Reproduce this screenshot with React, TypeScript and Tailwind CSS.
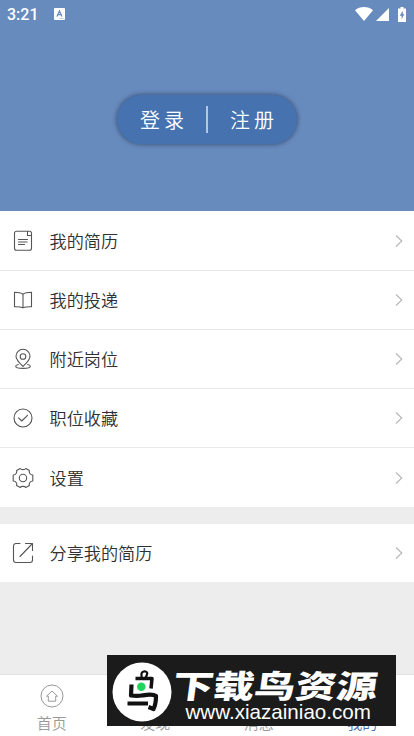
import React from "react";

interface MenuRowProps {
  label: string;
  icon: React.ReactNode;
  className?: string;
}

const iconProps = {
  width: 22,
  height: 22,
  viewBox: "0 0 22 22",
  fill: "none",
  stroke: "currentColor",
  strokeWidth: 1.1,
  strokeLinecap: "round" as const,
  strokeLinejoin: "round" as const,
};

const ResumeIcon = () => (
  <svg {...iconProps}>
    <path d="M15.500 1.300H4.500a2 2 0 0 0-2 2v15a2 2 0 0 0 2 2h13a2 2 0 0 0 2-2V5.500M15.500 1.300v4.200h4V3.300a2 2 0 0 0-2-2h-2" />
    <path d="M6.500 9.500h9M6.500 12h8.500M6.500 14.500h6" />
  </svg>
);

const BookIcon = () => (
  <svg {...iconProps}>
    <path d="M11 5.200C8.500 3.300 5.500 3.300 2.500 3.300v14.400c3 0 6-.2 8.500 1.100 2.500-1.300 5.500-1.100 8.500-1.100V3.300c-3 0-6 0-8.500 1.900zM11 5.200v13.300" />
  </svg>
);

const PinIcon = () => (
  <svg {...iconProps}>
    <path d="M11 18.300C7.500 15 4 12 4 8.200a7 6.900 0 0 1 14 0c0 3.800-3.500 6.800-7 10.100z" />
    <circle cx="11" cy="8.500" r="2.800" />
    <path d="M6.300 16.500c-1.600.4-2.600 1-2.600 1.700 0 1.300 3.200 2.200 7.300 2.200s7.300-.9 7.300-2.200c0-.7-1-1.300-2.600-1.700" />
  </svg>
);

const CheckIcon = () => (
  <svg {...iconProps}>
    <circle cx="11" cy="11" r="9" />
    <path d="M6.500 10.800l3.300 3.200 5.700-5.700" />
  </svg>
);

const GearIcon = () => (
  <svg {...iconProps}>
    <path d="M8.200 1.500c.9 1.500 4.700 1.500 5.600 0l3.600 1.900c-.7 2 .7 4.600 3.400 4.600v6c-2.700 0-4.100 2.600-3.400 4.600l-3.600 1.900c-.9-1.500-4.700-1.500-5.600 0l-3.600-1.900c.7-2-.7-4.600-3.400-4.600V8c2.700 0 4.100-2.600 3.400-4.600z" />
    <circle cx="11" cy="11" r="3.700" />
  </svg>
);

const ShareIcon = () => (
  <svg {...iconProps}>
    <path d="M8 1.500H4A2.500 2.500 0 0 0 1.500 4v14A2.500 2.500 0 0 0 4 20.500h14a2.500 2.500 0 0 0 2.500-2.500v-4M13.500 1.500h7v7M20 2L8 14.500" />
  </svg>
);

const MenuRow: React.FC<MenuRowProps> = ({ label, icon, className = "h-[59px]" }) => (
  <div className={`flex items-center bg-white pl-3 pr-[11px] ${className}`}>
    <span className="text-[#555]">{icon}</span>
    <span className="ml-[15.500px] flex-1 text-[17.150px] font-[350] leading-6 text-[#303030]">{label}</span>
    <svg width="8" height="12" viewBox="0 0 8 12" fill="none" stroke="#b5b5b8" strokeWidth="1.100">
      <path d="M1 .5l5.800 5.500L1 11.500" />
    </svg>
  </div>
);

const StatusBar = () => (
  <div className="flex h-7 items-center pl-[7px] pr-2 text-white">
    <span className="mt-px w-[47px] font-[Roboto] text-[16px] font-medium leading-5">3:21</span>
    <svg width="11" height="12" viewBox="0 0 11 12">
      <rect width="11" height="12" rx="1" fill="#fff" />
      <path d="M3 8.500L5.500 3 8 8.500M4 6.700h3" fill="none" stroke="#688bbe" strokeWidth="1.300" />
      <path d="M5.500 10.500h4" stroke="#688bbe" strokeWidth=".6" strokeDasharray="1 .6" />
    </svg>
    <svg className="ml-auto" width="18" height="14" viewBox="0 0 18 14">
      <path d="M0 3.300C5-1 13-1 18 3.300L9 14z" fill="#fff" />
    </svg>
    <svg className="ml-[3px]" width="13" height="13" viewBox="0 0 13 13">
      <path d="M13 0v13H0z" fill="#fff" />
    </svg>
    <svg className="ml-[9px]" width="8" height="15" viewBox="0 0 8 15">
      <path d="M2.500 0h3v1.500H8V15H0V1.500h2.500z" fill="#fff" />
      <path d="M4.800 3.800L1.700 8.700h1.900v3.600l2.800-5H4.800z" fill="#688bbe" />
    </svg>
  </div>
);

const HomeIcon = () => (
  <svg width="24" height="24" viewBox="0 0 24 24" fill="none" stroke="#999" strokeWidth="1">
    <circle cx="12" cy="12" r="11" />
    <path d="M6.500 12.200L12 7l5.500 5.200h-1.800v5H8.300v-5z" strokeLinejoin="round" />
  </svg>
);

const Watermark = () => (
  <div className="absolute left-[107px] top-[655px] flex h-[71px] w-[289px] bg-[#1b1b1b] text-white">
    <svg className="ml-[5px] mt-[7px] shrink-0" width="60" height="60" viewBox="0 0 60 60">
      <circle cx="30" cy="30" r="29.500" fill="#fff" />
      <g fill="none" stroke="#111" strokeLinejoin="round">
        <path d="M29.500 15v-3.500q1-2.500 4-2 2.500.7 1.300 3.500l-1.300 3" strokeWidth="2.200" />
        <path d="M23.500 16.500H40l-1 10" strokeWidth="3.500" />
        <path d="M19.500 22.500L19 33.500q6 1 12-.2 10-1.500 13 .7 0 8-2.500 13l-5-2" strokeWidth="4.200" />
        <path d="M15.500 41.500h20.500" strokeWidth="4" />
      </g>
      <circle cx="29.300" cy="24.700" r="6" fill="#fff" />
      <circle cx="29.300" cy="24.700" r="4.300" fill="#20d55b" />
    </svg>
    <div className="relative flex-1 whitespace-nowrap">
      <div className="absolute left-[1px] top-[7px] origin-left -skew-x-6 scale-x-[1.170] scale-y-[0.910] text-[35px] font-black leading-[44px]">
        下载鸟资源
      </div>
      <div className="absolute left-[13.500px] top-[45px] font-['Liberation_Sans',sans-serif] text-[20.600px] leading-6">
        www.xiazainiao.com
      </div>
    </div>
  </div>
);

const App: React.FC = () => {
  return (
    <div className="relative flex h-[736px] w-[414px] flex-col overflow-hidden bg-[#ededed] font-['Noto_Sans_CJK_SC',sans-serif]">
      <header className="h-[211px] bg-[#688bbe]">
        <StatusBar />
        <div className="mx-auto mt-[67px] flex h-[49px] w-[180px] items-center rounded-full bg-[#4672b0] text-[20px] font-[350] text-white shadow-[0_0_4px_1px_rgba(45,65,95,0.65)]">
          <span className="w-[89px] pl-[23px] tracking-[4px]">登录</span>
          <span className="h-[27px] w-[2px] bg-[#b5c7df]" />
          <span className="pl-[22px] tracking-[4px]">注册</span>
        </div>
      </header>

      <MenuRow label="我的简历" icon={<ResumeIcon />} className="h-[60px] border-b border-[#e8e8e8]" />
      <MenuRow label="我的投递" icon={<BookIcon />} className="h-[59px] border-b border-[#e8e8e8]" />
      <MenuRow label="附近岗位" icon={<PinIcon />} className="h-[59px] border-b border-[#e8e8e8]" />
      <MenuRow label="职位收藏" icon={<CheckIcon />} className="h-[59px] border-b border-[#e8e8e8]" />
      <MenuRow label="设置" icon={<GearIcon />} />
      <div className="h-[17px]" />
      <MenuRow label="分享我的简历" icon={<ShareIcon />} className="h-[58px]" />

      <nav className="mt-auto grid h-[62px] grid-cols-4 border-t border-[#e2e2e2] bg-white text-[15px] font-[350] leading-5 text-[#999]">
        <div className="flex flex-col items-center pt-[9px]">
          <HomeIcon />
          <span className="mt-[5px]">首页</span>
        </div>
        <div className="pt-[38px] text-center">发现</div>
        <div className="pt-[38px] text-center">消息</div>
        <div className="pt-[38px] text-center text-[#4672b0]">我的</div>
      </nav>

      <Watermark />
    </div>
  );
};

export default App;
